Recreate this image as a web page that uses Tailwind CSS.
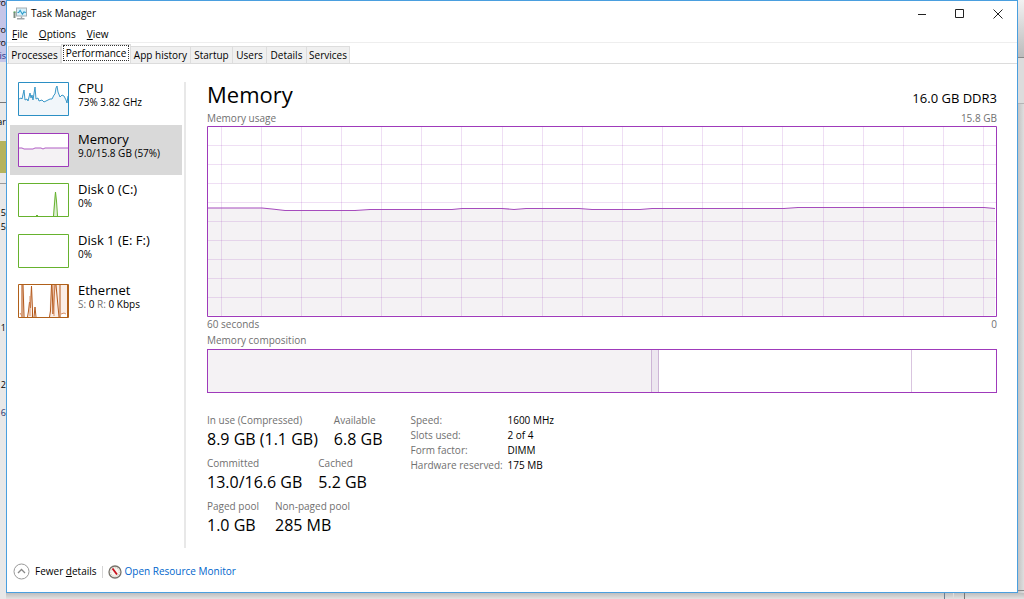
<!DOCTYPE html>
<html lang="en">
<head>
    <meta charset="UTF-8">
    <meta name="viewport" content="width=device-width, initial-scale=1.0">
    <title>Task Manager</title>
    <script src="https://cdn.jsdelivr.net/npm/@tailwindcss/browser@4"></script>
</head>
<body class="relative flex min-h-screen overflow-hidden bg-[#e4e4e4] pl-[6px] pr-[6px] pb-[6px] font-['Open_Sans','Noto_Sans',sans-serif] text-[10px] leading-[15px] text-black">

    <!-- windows behind -->
    <div class="absolute inset-y-0 left-0 w-[6px] overflow-hidden bg-[#e8e8e8] text-[9px] leading-[12px]" aria-hidden="true">
        <div class="absolute inset-x-0 top-0 h-[62px] bg-[#c5c5e8]"></div>
        <div class="absolute inset-x-0 top-[102px] h-px bg-[#777777]"></div>
        <div class="absolute inset-x-0 top-[141px] h-[32px] bg-[#b5b35c]"></div>
        <div class="absolute inset-x-0 top-[183px] h-px bg-[#999999]"></div>
        <span class="absolute right-0 top-[-3px]">ro</span>
        <span class="absolute right-0 top-[24px]">ro</span>
        <span class="absolute right-0 top-[37px]">ro</span>
        <span class="absolute right-0 top-[50px] text-[#1a2f8a]">Vis</span>
        <span class="absolute right-0 top-[116px]">ar</span>
        <span class="absolute right-0 top-[207px]">5</span>
        <span class="absolute right-0 top-[221px]">5</span>
        <span class="absolute right-0 top-[322px]">1</span>
        <span class="absolute right-0 top-[379px]">2</span>
        <span class="absolute right-0 top-[407px] text-[#1a2f6a]">16</span>
    </div>
    <div class="absolute inset-y-0 right-0 w-[6px] bg-linear-to-r from-[#c4c4c4] to-[#dedede]" aria-hidden="true">
        <div class="absolute inset-x-0 top-0 h-[57px] bg-linear-to-b from-[#f2f2f2] to-[#bcbcbc]"></div>
        <div class="absolute inset-x-0 top-[57px] h-px bg-[#888888]"></div>
        <div class="absolute inset-x-0 top-[58px] h-[45px] bg-[#dcdcdc]"></div>
        <div class="absolute inset-x-0 top-[103px] h-px bg-[#b5b5b5]"></div>
        <div class="absolute inset-x-0 top-[590px] h-px bg-[#888888]"></div>
    </div>
    <div class="absolute inset-x-0 bottom-0 h-[6px] bg-linear-to-b from-[#bebebe] to-[#e2e2e2]" aria-hidden="true">
        <div class="absolute inset-y-0 left-0 w-[6px] bg-[#e8e8e8]"></div>
        <div class="absolute inset-y-0 right-[79px] w-px bg-[#6b7f93]"></div>
        <div class="absolute inset-y-0 right-[70px] w-px bg-[#dddddd]"></div>
        <div class="absolute inset-y-0 right-[59px] w-px bg-[#777777]"></div>
    </div>

    <div class="relative flex flex-1 flex-col border border-[#4a9fdf] bg-white">

        <header class="flex h-[25px] items-center pl-[6px] pr-1">
            <svg class="mr-1 h-[13px] w-[14px]" viewBox="0 0 14 13" fill="none">
                <path d="M1.5 5v6" stroke="#7d8c83" stroke-width="2"/>
                <path d="M.6 5h2" stroke="#52a35b" stroke-width="1.2"/>
                <rect x="3.5" y="1" width="10" height="8" fill="#d7f1fb" stroke="#a5adb2"/>
                <path d="M4.5 5.5h1.2l1.4-2.2 2.3 4 1.5-2.4 2 .6" stroke="#2f9cc9" stroke-width="1.1"/>
                <path d="M8.5 9.5v2M4 11.7h7.5" stroke="#9da3a6" stroke-width="1.4"/>
            </svg>
            <h1>Task Manager</h1>
            <div class="ml-auto flex gap-[7px]">
                <button class="flex h-6 w-[31px] items-center justify-center" aria-label="Minimize">
                    <svg class="h-[10px] w-[10px]" viewBox="0 0 10 10" stroke="#222"><path d="M1 5.5h8"/></svg>
                </button>
                <button class="flex h-6 w-[31px] items-center justify-center" aria-label="Maximize">
                    <svg class="h-[10px] w-[10px]" viewBox="0 0 10 10" stroke="#222" fill="none"><path d="M.5 .5h8v8h-8z"/></svg>
                </button>
                <button class="flex h-6 w-[31px] items-center justify-center" aria-label="Close">
                    <svg class="h-[10px] w-[10px]" viewBox="0 0 10 10" stroke="#222"><path d="M.5.5l9 9M9.500.5l-9 9"/></svg>
                </button>
            </div>
        </header>

        <nav class="flex h-[17px] items-center gap-[11px] border-b border-[#eeeeee] pl-[5px]">
            <button><u>F</u>ile</button>
            <button><u>O</u>ptions</button>
            <button><u>V</u>iew</button>
        </nav>

        <div class="flex h-[21px] items-end border-b border-[#dcdcdc] pl-px" role="tablist">
            <button class="h-[17px] w-[53px] border-x border-t border-[#dddddd] bg-[#f0f0f0]" role="tab">Processes</button>
            <button class="h-[19px] w-[70px] border border-b-0 border-[#dddddd] bg-white px-px pb-[2px]" role="tab" aria-selected="true">
                <span class="block h-[16px] border border-dotted border-[#333333] leading-[14px]">Performance</span>
            </button>
            <button class="h-[17px] w-[60px] border-r border-t border-[#dddddd] bg-[#f0f0f0]" role="tab">App history</button>
            <button class="h-[17px] w-[42px] border-r border-t border-[#dddddd] bg-[#f0f0f0]" role="tab">Startup</button>
            <button class="h-[17px] w-[34px] border-r border-t border-[#dddddd] bg-[#f0f0f0]" role="tab">Users</button>
            <button class="h-[17px] w-[40px] border-r border-t border-[#dddddd] bg-[#f0f0f0]" role="tab">Details</button>
            <button class="h-[17px] w-[43px] border-r border-t border-[#dddddd] bg-[#f0f0f0]" role="tab">Services</button>
        </div>

        <main class="flex flex-1 pt-[10px]">
            <aside class="flex w-[177px] flex-col pl-[3px] pr-[2px]">
                <div class="flex h-[252px] flex-col justify-between">
                    <button class="flex h-[50px] items-start gap-2 px-2 pt-[7px] text-left">
                        <svg class="mt-px h-[35px] w-[52px]" viewBox="0 0 52 35" fill="none">
                            <path d="M1 17l2-1 1 1 2-9 1 10 2-1 1 2 2-8 1 5 1-3 1 5 2-13 1 12 2-1 1 3 3-1 2 2 4-2 2-1 2 0 2-4 1-1 1-6 1-2 1 6 2 5 2-2 2 1 2 4 1 3 1-7V34H1z" fill="#f1f6fa"/>
                            <path d="M1 17l2-1 1 1 2-9 1 10 2-1 1 2 2-8 1 5 1-3 1 5 2-13 1 12 2-1 1 3 3-1 2 2 4-2 2-1 2 0 2-4 1-1 1-6 1-2 1 6 2 5 2-2 2 1 2 4 1 3 1-7" stroke="#3a98c8"/>
                            <path d="M.5.5h50v33H.5z" stroke="#2b8fc4"/>
                        </svg>
                        <span>
                            <span class="block text-[13px] leading-[14px]">CPU</span>
                            <span class="block leading-[14px]">73% 3.82 GHz</span>
                        </span>
                    </button>
                    <button class="flex h-[50px] items-start gap-2 bg-[#d9d9d9] px-2 pt-[7px] text-left">
                        <svg class="mt-px h-[35px] w-[52px]" viewBox="0 0 52 35" fill="none">
                            <path d="M.5.5h50v33H.5z" fill="#fff"/>
                            <path d="M1 15h3l2 1h9l2-1h6l2 1 2-1h23v18H1z" fill="#f4f2f4"/>
                            <path d="M1 15h3l2 1h9l2-1h6l2 1 2-1h23" stroke="#b05cc4"/>
                            <path d="M.5.5h50v33H.5z" stroke="#9f3abb"/>
                        </svg>
                        <span>
                            <span class="block text-[13px] leading-[14px]">Memory</span>
                            <span class="block leading-[14px]">9.0/15.8 GB (57%)</span>
                        </span>
                    </button>
                    <button class="flex h-[50px] items-start gap-2 px-2 pt-[7px] text-left">
                        <svg class="mt-px h-[35px] w-[52px]" viewBox="0 0 52 35" fill="none">
                            <path d="M35 33l1-17 1-8 1 8 1 17z" fill="#dff0d4"/>
                            <path d="M18 33l1-1 1 1M35.500 33l1-12 1-12 1 9 1 15" stroke="#66b22e"/>
                            <path d="M.5.5h50v33H.5z" stroke="#66b22e"/>
                        </svg>
                        <span>
                            <span class="block text-[13px] leading-[14px]">Disk 0 (C:)</span>
                            <span class="block leading-[14px]">0%</span>
                        </span>
                    </button>
                    <button class="flex h-[50px] items-start gap-2 px-2 pt-[7px] text-left">
                        <svg class="mt-px h-[35px] w-[52px]" viewBox="0 0 52 35" fill="none">
                            <path d="M.5.5h50v33H.5z" stroke="#66b22e"/>
                        </svg>
                        <span>
                            <span class="block text-[13px] leading-[14px]">Disk 1 (E: F:)</span>
                            <span class="block leading-[14px]">0%</span>
                        </span>
                    </button>
                    <button class="flex h-[50px] items-start gap-2 px-2 pt-[7px] text-left">
                        <svg class="mt-px h-[35px] w-[52px]" viewBox="0 0 52 35" fill="none">
                            <path d="M3 33V1h3l1 32zM10 33l3-32 1 32zM31 33l2-32h16v28l-6 1v3z" fill="#fbeee6"/>
                            <path d="M4 33V1M5 1l1 32M9.500 33l1-6 1-9 1 6 1-22 1 24v7M16 33l1-10 1 10M31.500 33l1-6 1-26M34 1l1 29 1-15 1-14M38 1l3 32M42 1v32" stroke="#b4591c"/>
                            <path d="M2 29l2 3M12 12v20M36 1v31M43 30l3-1 2 1" stroke="#d99066"/>
                            <path d="M.5.5h50v33H.5zM49.500 1v33" stroke="#b0601a"/>
                        </svg>
                        <span>
                            <span class="block text-[13px] leading-[14px]">Ethernet</span>
                            <span class="block leading-[14px]"><span class="text-[#707070]">S:</span> 0 <span class="text-[#707070]">R:</span> 0 Kbps</span>
                        </span>
                    </button>
                </div>
            </aside>

            <section class="mt-2 flex-1 border-l-2 border-[#e8e8e8] pl-[21px] pr-5">
                <div class="flex h-[29px] items-end justify-between">
                    <h2 class="text-[22px] leading-[34px]">Memory</h2>
                    <p class="text-[13px] leading-[26px]">16.0 GB DDR3</p>
                </div>
                <div class="flex justify-between text-[#707070]">
                    <span>Memory usage</span>
                    <span>15.8 GB</span>
                </div>
                <svg class="block h-[191px] w-full" viewBox="0 0 790 191" preserveAspectRatio="none" fill="none">
                    <path d="M1 82h54l10 1 13 1.500h70l15-1h82l10-1h40l12 1 12-1h53l13 1h48l12-1h132l14-1h186l11 1v107H1z" fill="#f4f2f4"/>
                    <path d="M14.500 0v191M54.500 0v191M94.500 0v191M134.500 0v191M174.500 0v191M214.500 0v191M254.500 0v191M295.500 0v191M335.500 0v191M375.500 0v191M415.500 0v191M455.500 0v191M495.500 0v191M535.500 0v191M575.500 0v191M616.500 0v191M656.500 0v191M696.500 0v191M736.500 0v191M776.500 0v191M0 19.500h790M0 38.500h790M0 57.500h790M0 76.500h790M0 95.500h790M0 114.500h790M0 133.500h790M0 152.500h790M0 171.500h790" stroke="#9528b4" stroke-opacity=".15"/>
                    <path d="M1 82h54l10 1 13 1.500h70l15-1h82l10-1h40l12 1 12-1h53l13 1h48l12-1h132l14-1h186l11 1" stroke="#a64cbd" stroke-width="1.200"/>
                    <path d="M.5.5h789v190H.5z" stroke="#9f3abb"/>
                </svg>
                <div class="flex justify-between text-[#707070]">
                    <span>60 seconds</span>
                    <span>0</span>
                </div>
                <p class="mt-px text-[#707070]">Memory composition</p>
                <div class="mt-px flex h-[44px] border border-[#9f3abb]">
                    <div class="border-r border-[#cdb5d6] bg-[#f4f2f4]" style="width: 56.4%"></div>
                    <div class="border-r border-[#cdb5d6] bg-[#ede6f0]" style="width: 0.8%"></div>
                    <div class="border-r border-[#d9c5df]" style="width: 32.1%"></div>
                </div>

                <div class="mt-5 flex gap-7">
                    <div class="flex flex-col">
                        <dl class="flex h-[43px] gap-4">
                            <div><dt class="text-[#707070]">In use (Compressed)</dt><dd class="text-[16px] leading-[23px]">8.9 GB (1.1 GB)</dd></div>
                            <div><dt class="text-[#707070]">Available</dt><dd class="text-[16px] leading-[23px]">6.8 GB</dd></div>
                        </dl>
                        <dl class="flex h-[43px] gap-4">
                            <div><dt class="text-[#707070]">Committed</dt><dd class="text-[16px] leading-[23px]">13.0/16.6 GB</dd></div>
                            <div><dt class="text-[#707070]">Cached</dt><dd class="text-[16px] leading-[23px]">5.2 GB</dd></div>
                        </dl>
                        <dl class="flex h-[43px] gap-4">
                            <div><dt class="text-[#707070]">Paged pool</dt><dd class="text-[16px] leading-[23px]">1.0 GB</dd></div>
                            <div><dt class="text-[#707070]">Non-paged pool</dt><dd class="text-[16px] leading-[23px]">285 MB</dd></div>
                        </dl>
                    </div>
                    <dl class="grid grid-cols-[97px_auto] content-start">
                        <dt class="text-[#707070]">Speed:</dt><dd>1600 MHz</dd>
                        <dt class="text-[#707070]">Slots used:</dt><dd>2 of 4</dd>
                        <dt class="text-[#707070]">Form factor:</dt><dd>DIMM</dd>
                        <dt class="text-[#707070]">Hardware reserved:</dt><dd>175 MB</dd>
                    </dl>
                </div>
            </section>
        </main>

        <footer class="flex h-[44px] items-center pl-[6px] pt-[3px]">
            <button class="flex items-center gap-[5px]">
                <svg class="h-[17px] w-[17px]" viewBox="0 0 17 17" fill="none">
                    <circle cx="8.500" cy="8.500" r="7.500" stroke="#999"/>
                    <path d="M5 10l3.500-3.500L12 10" stroke="#888" stroke-width="1.300"/>
                </svg>
                <span>Fewer <u>d</u>etails</span>
            </button>
            <div class="mx-[5px] h-[12px] w-px bg-[#d5d5d5]"></div>
            <a href="#" class="flex items-center gap-[3px] text-[#0066cc]">
                <svg class="h-[14px] w-[14px]" viewBox="0 0 14 14" fill="none">
                    <circle cx="7" cy="7" r="6" fill="#f8f5ef" stroke="#77736b" stroke-width="1.300"/>
                    <circle cx="7" cy="7" r="4.300" stroke="#c5bfb4" stroke-dasharray="1 1"/>
                    <path d="M4.500 3.500l4.500 6" stroke="#c9101c" stroke-width="1.900"/>
                </svg>
                Open Resource Monitor
            </a>
        </footer>
    </div>
</body>
</html>
